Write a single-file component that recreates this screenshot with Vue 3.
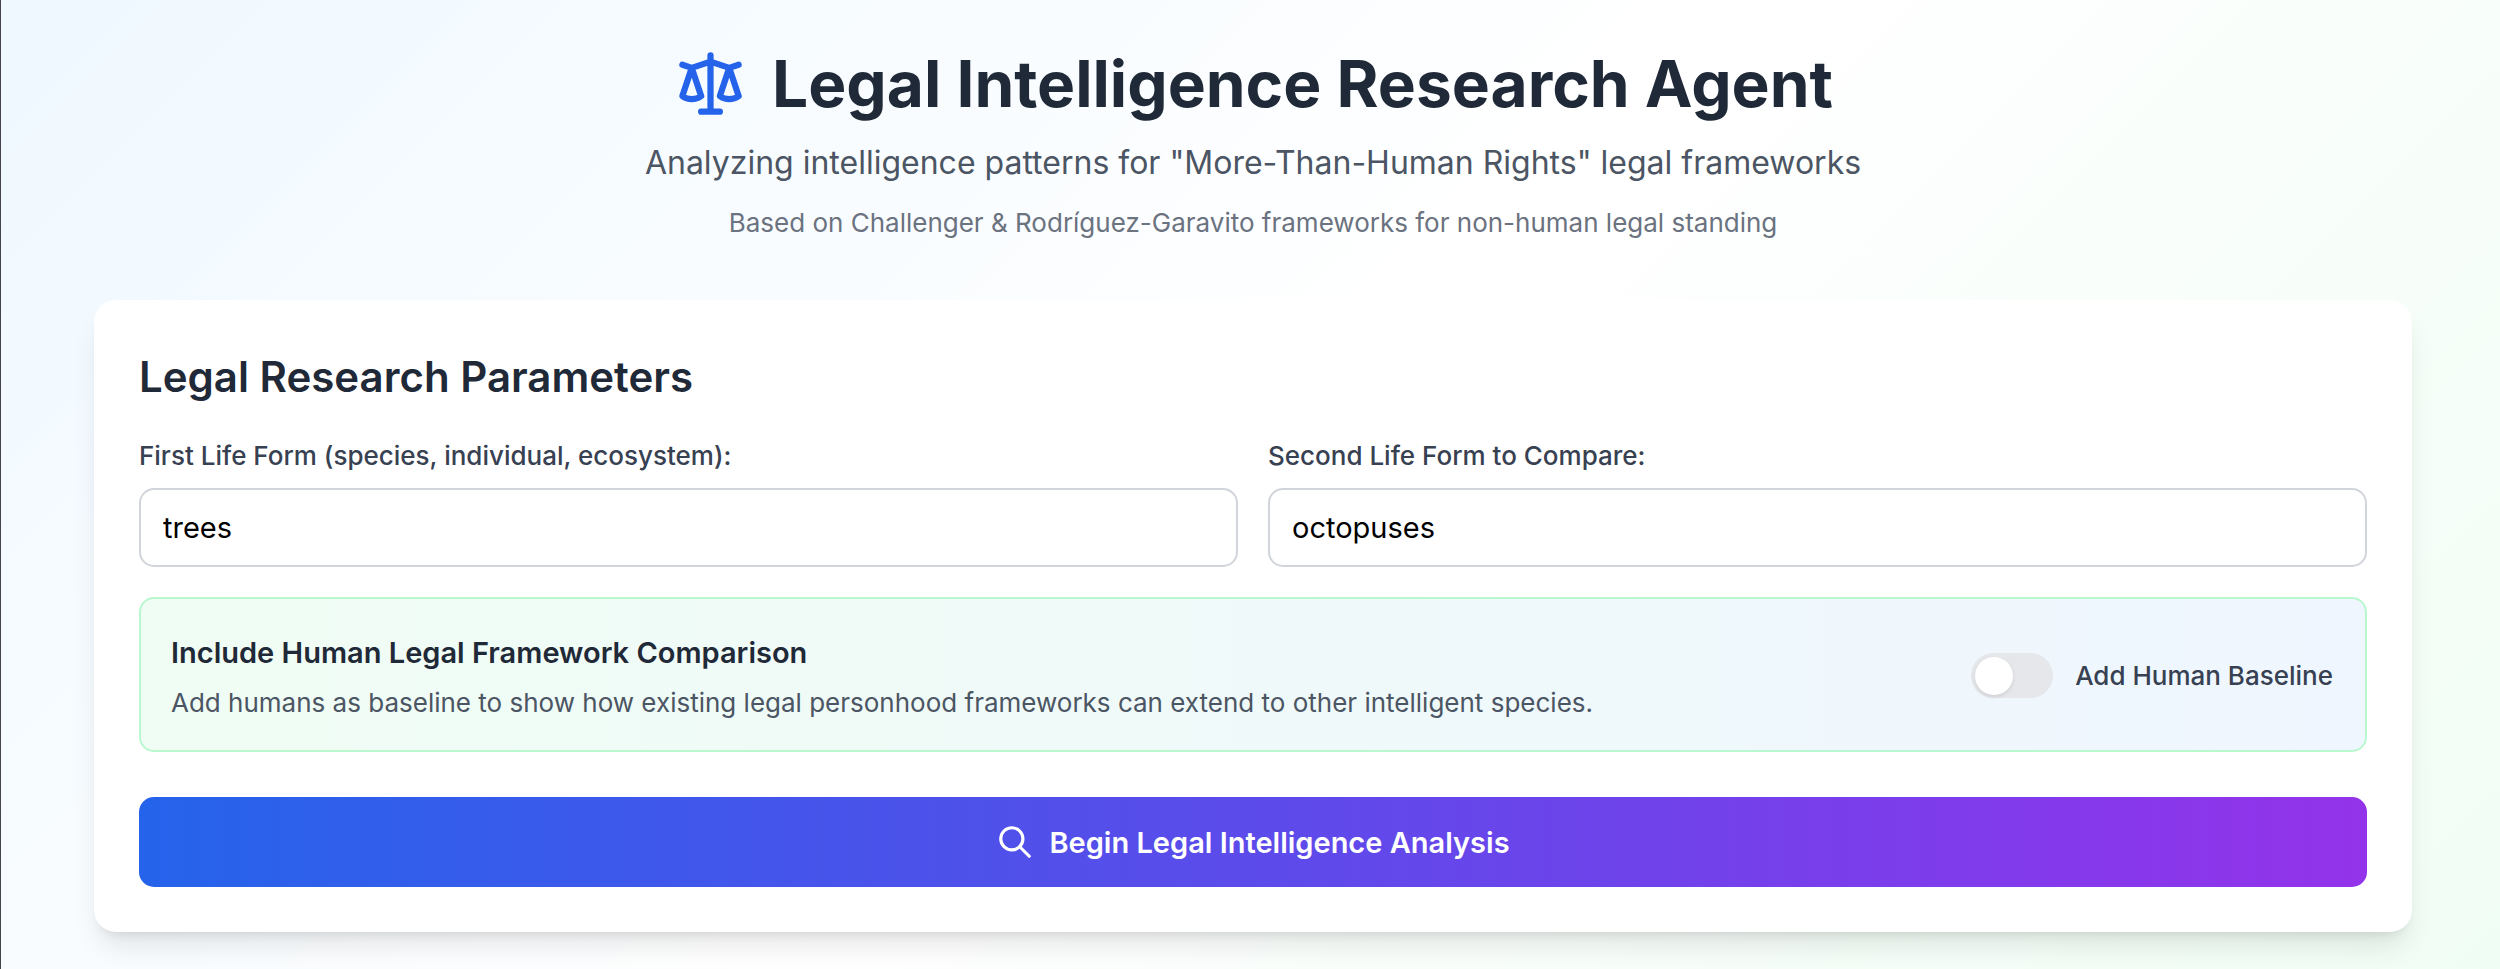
<script setup>
import {ref} from 'vue';

const first = ref('trees');
const second = ref('octopuses');
const human_baseline = ref(false);
</script>

<template>
  <main>
    <header>
        <div class="title">
            <svg class="scales" viewBox="0 0 24 24" aria-hidden="true">
                <path d="M3 6l3 1m0 0l-3 9a5.002 5.002 0 006.001 0M6 7l3 9M6 7l6-2m6 2l3-1m-3 1l-3 9a5.002 5.002 0 006.001 0M18 7l3 9m-3-9l-6-2m0-2v2m0 16V5m0 16H9m3 0h3" />
            </svg>
            <h1>Legal Intelligence Research Agent</h1>
        </div>
        <p class="subtitle">Analyzing intelligence patterns for "More-Than-Human Rights" legal frameworks</p>
        <p class="note">Based on Challenger &amp; Rodríguez-Garavito frameworks for non-human legal standing</p>
    </header>
    <form class="card" @submit.prevent>
        <h2>Legal Research Parameters</h2>
        <div class="fields">
            <div class="field">
                <label for="first">First Life Form (species, individual, ecosystem):</label>
                <input id="first" type="text" v-model="first">
            </div>
            <div class="field">
                <label for="second">Second Life Form to Compare:</label>
                <input id="second" type="text" v-model="second">
            </div>
        </div>
        <div class="human">
            <div class="human-text">
                <h3>Include Human Legal Framework Comparison</h3>
                <p>Add humans as baseline to show how existing legal personhood frameworks can extend to other intelligent species.</p>
            </div>
            <label class="toggle">
                <input type="checkbox" v-model="human_baseline">
                <span>Add Human Baseline</span>
            </label>
        </div>
        <button type="submit" class="btn">
            <svg viewBox="0 0 24 24" aria-hidden="true">
                <path d="M21 21l-6-6m2-5a7 7 0 11-14 0 7 7 0 0114 0z" />
            </svg>
            <span>Begin Legal Intelligence Analysis</span>
        </button>
    </form>
  </main>
</template>

<style>
body {
    margin: 0;
}
</style>

<style scoped>
* {
    margin: 0;
    padding: 0;
    box-sizing: border-box;
    font-family: Inter, 'Liberation Sans', sans-serif;
}
main {
    min-height: 100vh;
    padding: 46px 88px 37px 93px;
    border-left: 1px solid #45434b;
    background: linear-gradient(135deg, #eff8ff, #ffffff, #f0fdf4);
}
svg {
    fill: none;
    stroke: currentColor;
    stroke-width: 2;
    stroke-linecap: round;
    stroke-linejoin: round;
}
header {
    display: flex;
    flex-direction: column;
    align-items: center;
    margin-bottom: 58px;
    text-align: center;
}
.title {
    display: flex;
    align-items: center;
    gap: 24px;
    margin-bottom: 15px;
}
.scales {
    width: 75px;
    height: 75px;
    color: #2563eb;
}
h1 {
    color: #1f2937;
    font-size: 64px;
    line-height: 75px;
    font-weight: 700;
}
.subtitle {
    color: #4b5563;
    font-size: 32px;
    line-height: 53px;
    margin-bottom: 15px;
}
.note {
    color: #6b7280;
    font-size: 26px;
    line-height: 38px;
}
.card {
    background-color: #fff;
    border-radius: 22px;
    padding: 45px;
    box-shadow: 0 19px 28px -6px rgba(0, 0, 0, 0.1), 0 8px 11px -7px rgba(0, 0, 0, 0.1);
}
h2 {
    color: #1f2937;
    font-size: 42px;
    line-height: 64px;
    font-weight: 600;
    margin-bottom: 28px;
}
.fields {
    display: grid;
    grid-template-columns: 1fr 1fr;
    gap: 30px;
    margin-bottom: 30px;
}
.field label {
    display: block;
    color: #374151;
    font-size: 26px;
    line-height: 38px;
    font-weight: 500;
    margin-bottom: 13px;
}
.field input {
    display: block;
    width: 100%;
    height: 79px;
    padding: 0 22px;
    color: #000;
    background-color: #fff;
    border: 2px solid #d1d5db;
    border-radius: 15px;
    font-size: 29px;
    outline: none;
}
.human {
    display: flex;
    align-items: center;
    justify-content: space-between;
    padding: 30px 32px 28px 30px;
    border: 2px solid #b9f8cf;
    border-radius: 15px;
    background: linear-gradient(to right, #f0fdf4, #eff6ff);
    margin-bottom: 45px;
}
.human h3 {
    color: #1f2937;
    font-size: 29px;
    line-height: 48px;
    font-weight: 600;
    margin-bottom: 7px;
}
.human p {
    color: #4b5563;
    font-size: 26px;
    line-height: 38px;
}
.toggle {
    display: flex;
    align-items: center;
    gap: 22px;
    color: #374151;
    font-size: 26px;
    line-height: 38px;
    font-weight: 500;
    cursor: pointer;
}
.toggle input {
    appearance: none;
    display: flex;
    align-items: center;
    width: 82px;
    height: 45px;
    padding: 4px;
    border-radius: 23px;
    background-color: #e5e7eb;
    cursor: pointer;
}
.toggle input::before {
    content: '';
    width: 38px;
    height: 38px;
    border-radius: 50%;
    background-color: #fff;
    box-shadow: 0 2px 4px rgba(0, 0, 0, 0.1);
}
.toggle input:checked {
    justify-content: flex-end;
    background-color: #2563eb;
}
.btn {
    display: flex;
    align-items: center;
    justify-content: center;
    gap: 15px;
    width: 100%;
    height: 90px;
    border: none;
    border-radius: 15px;
    color: #fff;
    background: linear-gradient(to right, #2563eb, #9333ea);
    font-size: 29px;
    line-height: 45px;
    font-weight: 600;
    cursor: pointer;
}
.btn svg {
    width: 38px;
    height: 38px;
}
</style>
